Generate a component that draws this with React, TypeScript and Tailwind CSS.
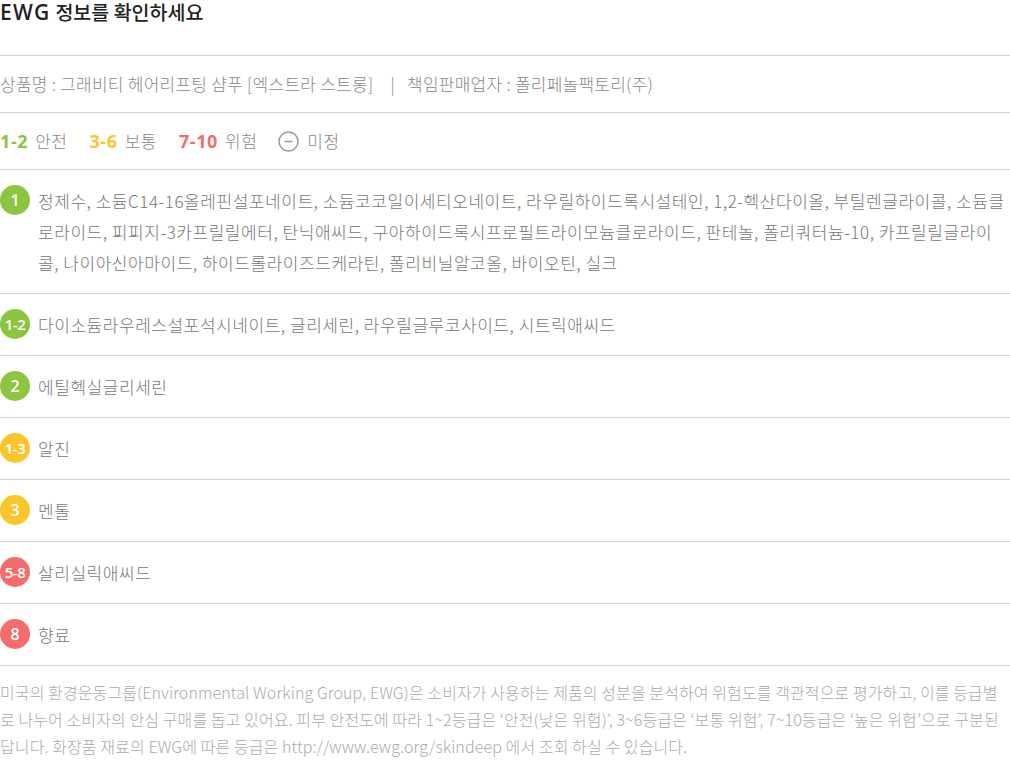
import React from "react";

const KR = '"Noto Sans CJK KR", "Noto Sans", sans-serif';
const NUM = '"Open Sans", "Noto Sans CJK KR", sans-serif';

type Item = { grade: string; color: string; text: string };

const items: Item[] = [
  {
    grade: "1",
    color: "bg-[#8dc540]",
    text:
      "정제수, 소듐C14-16올레핀설포네이트, 소듐코코일이세티오네이트, 라우릴하이드록시설테인, 1,2-헥산다이올, 부틸렌글라이콜, 소듐클로라이드, 피피지-3카프릴릴에터, 탄닉애씨드, 구아하이드록시프로필트라이모늄클로라이드, 판테놀, 폴리쿼터늄-10, 카프릴릴글라이콜, 나이아신아마이드, 하이드롤라이즈드케라틴, 폴리비닐알코올, 바이오틴, 실크",
  },
  { grade: "1-2", color: "bg-[#8dc540]", text: "다이소듐라우레스설포석시네이트, 글리세린, 라우릴글루코사이드, 시트릭애씨드" },
  { grade: "2", color: "bg-[#8dc540]", text: "에틸헥실글리세린" },
  { grade: "1-3", color: "bg-[#fcc52c]", text: "알진" },
  { grade: "3", color: "bg-[#fcc52c]", text: "멘톨" },
  { grade: "5-8", color: "bg-[#f46c6c]", text: "살리실릭애씨드" },
  { grade: "8", color: "bg-[#f46c6c]", text: "향료" },
];

export default function App() {
  return (
    <div className="w-[1010px] bg-white" style={{ fontFamily: KR }}>
      <div className="h-[56px] border-b border-[#d2d2d2]">
        <h1 className="flex items-baseline h-[24px] text-[#222]">
          <span className="text-[21px] leading-[24px] font-semibold tracking-[1.2px]" style={{ fontFamily: NUM }}>EWG</span>
          <span className="ml-[5px] text-[19.5px] leading-[24px] font-medium">정보를 확인하세요</span>
        </h1>
      </div>
      <div className="h-[57px] border-b border-[#d2d2d2] flex items-center text-[17px] font-light text-[#888] tracking-[0.25px]">
        <span>상품명 : 그래비티 헤어리프팅 샴푸 [엑스트라 스트롱]</span>
        <span className="ml-[17px] mr-[12px]">|</span>
        <span>책임판매업자 : 폴리페놀팩토리(주)</span>
      </div>
      <div className="h-[57px] border-b border-[#d2d2d2] flex items-center text-[17px] font-light text-[#888] tracking-[0.5px]">
        <span className="font-bold text-[18px] text-[#8dc540] mr-[7px] tracking-[0.6px]" style={{ fontFamily: NUM }}>1-2</span>
        <span className="mr-[22px]">안전</span>
        <span className="font-bold text-[18px] text-[#fcc52c] mr-[7px] tracking-[0.6px]" style={{ fontFamily: NUM }}>3-6</span>
        <span className="mr-[22px]">보통</span>
        <span className="font-bold text-[18px] text-[#f46c6c] mr-[7px] tracking-[0.6px]" style={{ fontFamily: NUM }}>7-10</span>
        <span className="mr-[21px]">위험</span>
        <svg width="21" height="21" viewBox="0 0 21 21" className="mr-[8px]">
          <circle cx="10.5" cy="10.5" r="9.5" fill="none" stroke="#999" strokeWidth="1.5" />
          <line x1="6.5" y1="10.5" x2="14.5" y2="10.5" stroke="#999" strokeWidth="1.5" />
        </svg>
        <span>미정</span>
      </div>
      {items.map((it, i) => (
        <div key={i} className="flex items-start gap-[8px] border-b border-[#d2d2d2] py-[15px]">
          <div
            className={`${it.color} w-[30px] h-[30px] rounded-full flex items-center justify-center shrink-0 text-white font-semibold ${it.grade.length > 1 ? "text-[15px] tracking-[-0.5px]" : "text-[16px]"}`}
            style={{ fontFamily: NUM }}
          >
            {it.grade}
          </div>
          <p className="text-[17px] leading-[31px] font-light text-[#777] tracking-[0.55px]">{it.text}</p>
        </div>
      ))}
      <p className="pt-[13px] text-[16px] leading-[27px] font-light text-[#aaa] tracking-[0.1px]">
        미국의 환경운동그룹(Environmental Working Group, EWG)은 소비자가 사용하는 제품의 성분을 분석하여 위험도를 객관적으로 평가하고, 이를 등급별로 나누어 소비자의 안심 구매를 돕고 있어요. 피부 안전도에 따라 1~2등급은 ‘안전(낮은 위험)’, 3~6등급은 ‘보통 위험’, 7~10등급은 ‘높은 위험’으로 구분된답니다. 화장품 재료의 EWG에 따른 등급은 http://www.ewg.org/skindeep 에서 조회 하실 수 있습니다.
      </p>
    </div>
  );
}
